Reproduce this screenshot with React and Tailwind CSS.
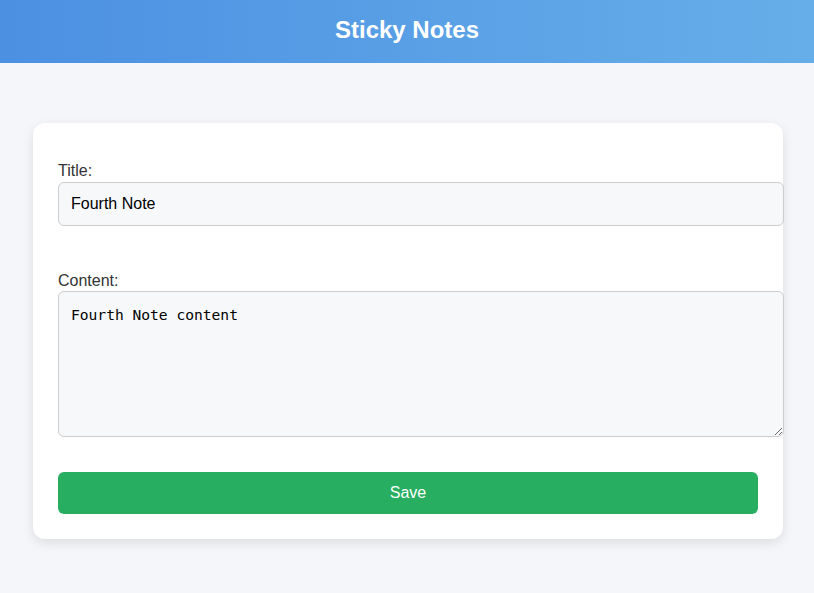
export default function App() {
  return (
    <div className="min-h-[593px] bg-[#f4f6f9]" style={{ fontFamily: '"Liberation Sans", Arial, sans-serif' }}>
      <header className="h-[63px] flex items-center justify-center pb-[3px] bg-gradient-to-r from-[#4c90e2] to-[#66aee9]">
        <h1 className="text-[24px] font-bold text-white leading-none">Sticky Notes</h1>
      </header>
      <div className="pt-[60px] pl-[33px]">
        <div className="w-[750px] bg-white rounded-[12px] shadow-[0_4px_12px_rgba(0,0,0,0.1)] px-[25px] pt-[39px] pb-[25px]">
          <label className="block text-[16px] leading-[18px] text-[#333] mb-[2px]">Title:</label>
          <input
            readOnly
            value="Fourth Note"
            className="box-content block w-full h-[18px] px-[12px] py-[12px] border border-[#cccccc] rounded-[6px] bg-[#f7f8fa] text-[16px] leading-[18px] text-black outline-none"
          />
          <label className="block mt-[46px] text-[16px] leading-[18px] text-[#333] mb-[1px]">Content:</label>
          <textarea
            readOnly
            value="Fourth Note content"
            className="box-content block w-full h-[120px] px-[12px] py-[12px] border border-[#cccccc] rounded-[6px] bg-[#f7f8fa] text-[14.6px] leading-[21px] text-black outline-none resize-y"
            style={{ fontFamily: '"DejaVu Sans Mono", monospace' }}
          />
          <button className="mt-[35px] block w-full h-[42px] rounded-[6px] bg-[#27ae60] text-white text-[16px]">Save</button>
        </div>
      </div>
    </div>
  );
}
